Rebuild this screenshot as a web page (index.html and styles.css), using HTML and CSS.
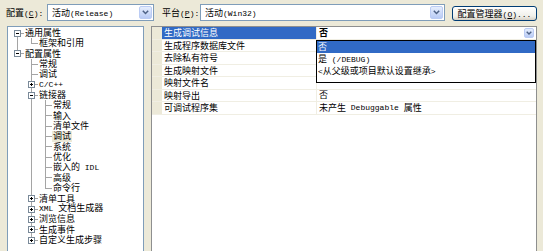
FILE: index.html
```html
<!DOCTYPE html>
<html lang="zh-CN">
<head>
<meta charset="utf-8">
<title>属性页</title>
<link rel="stylesheet" href="styles.css">
</head>
<body>
<div class="top">
  <span class="lbl l1">配置<span class="lat">(<u>C</u>):</span></span>
  <div class="combo c1"><span class="ctext">活动<span class="lat">(Release)</span></span><span class="dbtn"><svg width="7" height="5" viewBox="0 0 7 5"><path d="M0.8 0.8L3.5 3.5L6.2 0.8" fill="none" stroke="#4D6185" stroke-width="1.5"/></svg></span></div>
  <span class="lbl l2">平台<span class="lat">(<u>P</u>):</span></span>
  <div class="combo c2"><span class="ctext">活动<span class="lat">(Win32)</span></span><span class="dbtn"><svg width="7" height="5" viewBox="0 0 7 5"><path d="M0.8 0.8L3.5 3.5L6.2 0.8" fill="none" stroke="#4D6185" stroke-width="1.5"/></svg></span></div>
  <button class="btn">配置管理器<span class="lat">(<u>O</u>)...</span></button>
</div>
<div class="main">
  <div class="tree">
    <div class="tr"><span class="c bb"><svg width="7" height="7" viewBox="0 0 7 7"><rect x=".5" y=".5" width="6" height="6" fill="#fff" stroke="#7A8A99"/><path d="M2 3.5h3" stroke="#000"/></svg></span><span class="tx">通用属性</span></div>
    <div class="tr"><span class="c v"></span><span class="c l"></span><span class="tx">框架和引用</span></div>
    <div class="tr"><span class="c bt"><svg width="7" height="7" viewBox="0 0 7 7"><rect x=".5" y=".5" width="6" height="6" fill="#fff" stroke="#7A8A99"/><path d="M2 3.5h3" stroke="#000"/></svg></span><span class="tx">配置属性</span></div>
    <div class="tr"><span class="c"></span><span class="c t"></span><span class="tx">常规</span></div>
    <div class="tr"><span class="c"></span><span class="c t"></span><span class="tx">调试</span></div>
    <div class="tr"><span class="c"></span><span class="c bf"><svg width="7" height="7" viewBox="0 0 7 7"><rect x=".5" y=".5" width="6" height="6" fill="#fff" stroke="#7A8A99"/><path d="M2 3.5h3M3.5 2v3" stroke="#000"/></svg></span><span class="tx"><span class="lat">C/C++</span></span></div>
    <div class="tr"><span class="c"></span><span class="c bf"><svg width="7" height="7" viewBox="0 0 7 7"><rect x=".5" y=".5" width="6" height="6" fill="#fff" stroke="#7A8A99"/><path d="M2 3.5h3" stroke="#000"/></svg></span><span class="tx">链接器</span></div>
    <div class="tr"><span class="c"></span><span class="c v"></span><span class="c t"></span><span class="tx">常规</span></div>
    <div class="tr"><span class="c"></span><span class="c v"></span><span class="c t"></span><span class="tx">输入</span></div>
    <div class="tr"><span class="c"></span><span class="c v"></span><span class="c t"></span><span class="tx">清单文件</span></div>
    <div class="tr"><span class="c"></span><span class="c v"></span><span class="c t"></span><span class="tx sel">调试</span></div>
    <div class="tr"><span class="c"></span><span class="c v"></span><span class="c t"></span><span class="tx">系统</span></div>
    <div class="tr"><span class="c"></span><span class="c v"></span><span class="c t"></span><span class="tx">优化</span></div>
    <div class="tr"><span class="c"></span><span class="c v"></span><span class="c t"></span><span class="tx">嵌入的<span class="lat"> IDL</span></span></div>
    <div class="tr"><span class="c"></span><span class="c v"></span><span class="c t"></span><span class="tx">高级</span></div>
    <div class="tr"><span class="c"></span><span class="c v"></span><span class="c l"></span><span class="tx">命令行</span></div>
    <div class="tr"><span class="c"></span><span class="c bf"><svg width="7" height="7" viewBox="0 0 7 7"><rect x=".5" y=".5" width="6" height="6" fill="#fff" stroke="#7A8A99"/><path d="M2 3.5h3M3.5 2v3" stroke="#000"/></svg></span><span class="tx">清单工具</span></div>
    <div class="tr"><span class="c"></span><span class="c bf"><svg width="7" height="7" viewBox="0 0 7 7"><rect x=".5" y=".5" width="6" height="6" fill="#fff" stroke="#7A8A99"/><path d="M2 3.5h3M3.5 2v3" stroke="#000"/></svg></span><span class="tx"><span class="lat">XML </span>文档生成器</span></div>
    <div class="tr"><span class="c"></span><span class="c bf"><svg width="7" height="7" viewBox="0 0 7 7"><rect x=".5" y=".5" width="6" height="6" fill="#fff" stroke="#7A8A99"/><path d="M2 3.5h3M3.5 2v3" stroke="#000"/></svg></span><span class="tx">浏览信息</span></div>
    <div class="tr"><span class="c"></span><span class="c bf"><svg width="7" height="7" viewBox="0 0 7 7"><rect x=".5" y=".5" width="6" height="6" fill="#fff" stroke="#7A8A99"/><path d="M2 3.5h3M3.5 2v3" stroke="#000"/></svg></span><span class="tx">生成事件</span></div>
    <div class="tr"><span class="c"></span><span class="c bt"><svg width="7" height="7" viewBox="0 0 7 7"><rect x=".5" y=".5" width="6" height="6" fill="#fff" stroke="#7A8A99"/><path d="M2 3.5h3M3.5 2v3" stroke="#000"/></svg></span><span class="tx">自定义生成步骤</span></div>
  </div>
  <div class="grid">
    <div class="row"><span class="gut"></span><span class="nm sel">生成调试信息</span><span class="val edit"><b>否</b><span class="dbtn sm"><svg width="6" height="4" viewBox="0 0 6 4"><path d="M0.7 0.7L3 3L5.3 0.7" fill="none" stroke="#4D6185" stroke-width="1.4"/></svg></span></span></div>
    <div class="row"><span class="gut"></span><span class="nm">生成程序数据库文件</span><span class="val"></span></div>
    <div class="row"><span class="gut"></span><span class="nm">去除私有符号</span><span class="val"></span></div>
    <div class="row"><span class="gut"></span><span class="nm">生成映射文件</span><span class="val"></span></div>
    <div class="row"><span class="gut"></span><span class="nm">映射文件名</span><span class="val"></span></div>
    <div class="row"><span class="gut"></span><span class="nm">映射导出</span><span class="val">否</span></div>
    <div class="row"><span class="gut"></span><span class="nm">可调试程序集</span><span class="val">未产生<span class="lat"> Debuggable </span>属性</span></div>
    <div class="drop">
      <div class="opt on">否</div>
      <div class="opt">是<span class="lat"> (/DEBUG)</span></div>
      <div class="opt"><span class="lat">&lt;</span>从父级或项目默认设置继承<span class="lat">&gt;</span></div>
    </div>
  </div>
</div>
</body>
</html>
```
FILE: styles.css
```css
html, body {
  margin: 0;
  height: 100%;
  overflow: hidden;
}
body {
  background: #ECE9D8;
  font-family: "Noto Sans CJK SC", sans-serif;
  font-size: 9px;
  color: #000;
}
.lat {
  font-family: "Liberation Mono", "Noto Sans CJK SC", monospace;
  font-size: 8px;
  white-space: pre;
}
u { text-decoration: underline; }

/* top bar */
.top {
  display: flex;
  align-items: center;
  height: 17px;
  margin: 4px 0 0 6px;
}
.lbl {
  white-space: nowrap;
  flex: none;
}
.l1 { width: 41px; }
.l2 { width: 38px; }
.combo {
  flex: none;
  box-sizing: border-box;
  height: 17px;
  border: 1px solid #7F9DB9;
  background: #fff;
  display: flex;
  align-items: center;
  justify-content: space-between;
  padding: 0 1px 0 4px;
  white-space: nowrap;
}
.c1 { width: 107px; margin-right: 8px; }
.c2 { width: 245px; }
.dbtn {
  flex: none;
  box-sizing: border-box;
  width: 13px;
  height: 13px;
  border: 1px solid #BBCCF4;
  border-radius: 2px;
  background: linear-gradient(#E6EEFD, #B9CBF5);
  display: flex;
  align-items: center;
  justify-content: center;
}
.dbtn.sm {
  width: 10px;
  height: 10px;
}
.btn {
  flex: none;
  align-self: flex-end;
  margin-left: 7px;
  width: 85px;
  height: 15px;
  box-sizing: border-box;
  padding: 0;
  border: 1px solid #003C74;
  border-radius: 3px;
  background: linear-gradient(#FFFFFF, #F0F0EA 70%, #D6D0C5);
  font-family: "Noto Sans CJK SC", sans-serif;
  font-size: 9px;
  line-height: 13px;
  color: #000;
  white-space: nowrap;
}

/* main area */
.main {
  display: flex;
  margin-top: 5px;
  padding-left: 7px;
  height: 240px;
}
.tree {
  flex: none;
  width: 137px;
  box-sizing: border-box;
  border: 1px solid #7F9DB9;
  background: #fff;
  padding: 1px 0 0 2px;
  margin-right: 7px;
}
.tr {
  display: flex;
  align-items: center;
  height: 10.35px;
  line-height: 10.35px;
  white-space: nowrap;
}
.c {
  flex: none;
  width: 14px;
  height: 100%;
  display: flex;
  align-items: center;
  background-repeat: no-repeat;
}
.c svg { margin-left: 4px; display: block; }
.v {
  background-image: linear-gradient(#A5A5A5, #A5A5A5);
  background-size: 1px 100%;
  background-position: 7px 0;
}
.t, .bf {
  background-image: linear-gradient(#A5A5A5, #A5A5A5), linear-gradient(#A5A5A5, #A5A5A5);
  background-size: 1px 100%, 7px 1px;
  background-position: 7px 0, 7px 50%;
}
.l, .bt {
  background-image: linear-gradient(#A5A5A5, #A5A5A5), linear-gradient(#A5A5A5, #A5A5A5);
  background-size: 1px 50%, 7px 1px;
  background-position: 7px 0, 7px 50%;
}
.bb {
  background-image: linear-gradient(#A5A5A5, #A5A5A5), linear-gradient(#A5A5A5, #A5A5A5);
  background-size: 1px 50%, 7px 1px;
  background-position: 7px 100%, 7px 50%;
}
.tx {
  margin-left: 1px;
}
.tx.sel {
  background: #ECE9D8;
  padding: 0 1px;
  margin-left: 0;
}

/* property grid */
.grid {
  position: relative;
  flex: none;
  width: 386px;
  box-sizing: border-box;
  border: 1px solid #8E8F8F;
  background: #fff;
}
.row {
  display: flex;
  height: 12.5px;
  line-height: 12px;
  box-sizing: border-box;
  border-bottom: 1px solid #F0EEE3;
  white-space: nowrap;
}
.gut {
  flex: none;
  width: 10px;
  background: #ECE9D8;
}
.nm {
  flex: none;
  width: 155px;
  box-sizing: border-box;
  border-right: 1px solid #F0EEE3;
  padding-left: 2px;
}
.nm.sel {
  background: #316AC5;
  color: #fff;
}
.val {
  flex: 1;
  padding-left: 2px;
  display: flex;
  align-items: center;
}
.val.edit {
  justify-content: space-between;
  padding-right: 2px;
}
.drop {
  position: absolute;
  top: 13px;
  left: 164px;
  width: 220px;
  height: 43px;
  box-sizing: border-box;
  border: 1px solid #000;
  background: #fff;
}
.opt {
  height: 12px;
  line-height: 12px;
  padding-left: 1px;
  white-space: nowrap;
}
.opt.on {
  background: #316AC5;
  color: #fff;
}
```
